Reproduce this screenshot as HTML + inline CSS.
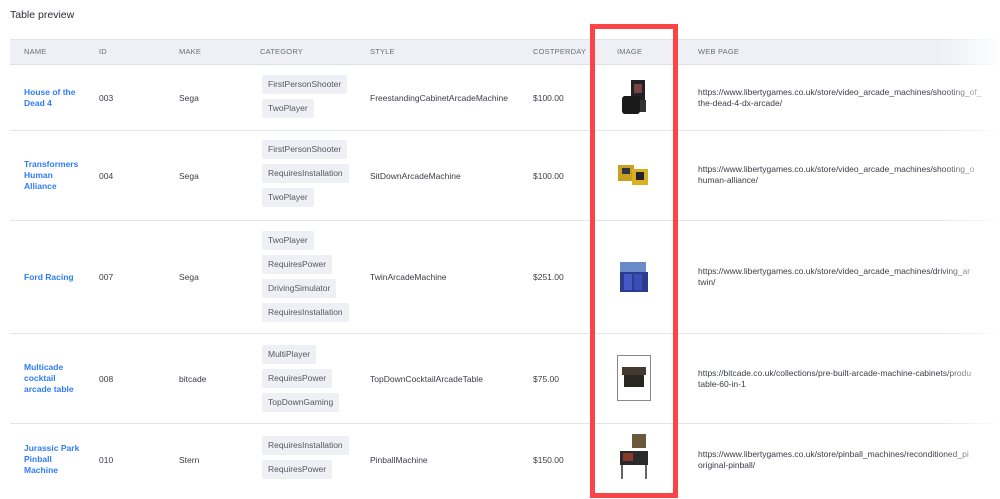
<!DOCTYPE html>
<html><head><meta charset="utf-8"><style>
*{margin:0;padding:0;box-sizing:border-box}
body{width:1000px;height:499px;overflow:hidden;background:#fff;font-family:"Liberation Sans",sans-serif;font-size:8.5px;color:#3a3d45;position:relative}
.a{position:absolute;white-space:nowrap}
.title{left:10px;top:9px;font-size:10.5px;color:#2a2c33}
.hdr{position:absolute;left:10px;top:39px;width:990px;height:26px;background:#eef0f5;border-top:1px solid #e2e4ea;border-bottom:1px solid #dde0e7}
.h{top:47px;font-size:7.5px;color:#6b6f7a;letter-spacing:.2px}
.line{position:absolute;left:10px;width:990px;height:1px;background:#e3e5ea}
.tag{position:absolute;left:262px;height:19px;line-height:19px;padding:0 6px;background:#eef0f5;border-radius:2px;color:#555962;font-size:8.5px;white-space:nowrap}
.nm{color:#2f7cf6;font-weight:bold;line-height:11px;font-size:8.5px;white-space:normal;width:60px}
.url{line-height:11px;left:698px}
.fade{position:absolute;left:940px;top:0;width:60px;height:499px;background:linear-gradient(to right,rgba(255,255,255,0),rgba(255,255,255,.95))}
.red{position:absolute;left:590px;top:24px;width:88px;height:474px;border:5px solid #fb4447}
.img{position:absolute}
</style></head><body>
<div class="a title">Table preview</div>
<div class="hdr"></div>
<div class="a h" style="left:24px">NAME</div>
<div class="a h" style="left:99px">ID</div>
<div class="a h" style="left:179px">MAKE</div>
<div class="a h" style="left:260px">CATEGORY</div>
<div class="a h" style="left:370px">STYLE</div>
<div class="a h" style="left:533px">COSTPERDAY</div>
<div class="a h" style="left:617px">IMAGE</div>
<div class="a h" style="left:698px">WEB PAGE</div>

<div class="line" style="top:130px"></div>
<div class="line" style="top:220px"></div>
<div class="line" style="top:333px"></div>
<div class="line" style="top:423px"></div>

<div class="a nm" style="left:24px;top:87px">House of the Dead 4</div>
<div class="a" style="left:99px;top:93px">003</div>
<div class="a" style="left:179px;top:93px">Sega</div>
<div class="tag" style="top:75px">FirstPersonShooter</div>
<div class="tag" style="top:99px">TwoPlayer</div>
<div class="a" style="left:370px;top:93px">FreestandingCabinetArcadeMachine</div>
<div class="a" style="left:533px;top:93px">$100.00</div>
<div class="a url" style="top:87px">https://www.libertygames.co.uk/store/video_arcade_machines/shooting_of_<br>the-dead-4-dx-arcade/</div>
<svg class="img" style="left:620px;top:80px" width="28" height="36"><rect x="11" y="0" width="14" height="22" fill="#222"/><rect x="14" y="4" width="8" height="9" fill="#744"/><rect x="2" y="16" width="18" height="18" rx="3" fill="#1a1a1a"/><rect x="20" y="20" width="6" height="12" fill="#333"/></svg>

<div class="a nm" style="left:24px;top:159px">Transformers Human Alliance</div>
<div class="a" style="left:99px;top:171px">004</div>
<div class="a" style="left:179px;top:171px">Sega</div>
<div class="tag" style="top:140px">FirstPersonShooter</div>
<div class="tag" style="top:164px">RequiresInstallation</div>
<div class="tag" style="top:188px">TwoPlayer</div>
<div class="a" style="left:370px;top:171px">SitDownArcadeMachine</div>
<div class="a" style="left:533px;top:171px">$100.00</div>
<div class="a url" style="top:164px">https://www.libertygames.co.uk/store/video_arcade_machines/shooting_o<br>human-alliance/</div>
<svg class="img" style="left:616px;top:163px" width="34" height="24"><rect x="2" y="2" width="16" height="16" fill="#c9a020"/><rect x="6" y="5" width="8" height="6" fill="#334"/><rect x="16" y="6" width="16" height="16" fill="#d8b020"/><rect x="20" y="9" width="8" height="8" fill="#223"/></svg>

<div class="a nm" style="left:24px;top:272px">Ford Racing</div>
<div class="a" style="left:99px;top:272px">007</div>
<div class="a" style="left:179px;top:272px">Sega</div>
<div class="tag" style="top:231px">TwoPlayer</div>
<div class="tag" style="top:255px">RequiresPower</div>
<div class="tag" style="top:279px">DrivingSimulator</div>
<div class="tag" style="top:303px">RequiresInstallation</div>
<div class="a" style="left:370px;top:272px">TwinArcadeMachine</div>
<div class="a" style="left:533px;top:272px">$251.00</div>
<div class="a url" style="top:266px">https://www.libertygames.co.uk/store/video_arcade_machines/driving_ar<br>twin/</div>
<svg class="img" style="left:618px;top:260px" width="32" height="34"><rect x="2" y="2" width="26" height="10" fill="#6a8ac8"/><rect x="2" y="12" width="28" height="20" fill="#2a3c8c"/><rect x="6" y="14" width="8" height="16" fill="#4658c8"/><rect x="16" y="14" width="8" height="16" fill="#3a4cb8"/></svg>

<div class="a nm" style="left:24px;top:362px">Multicade cocktail arcade table</div>
<div class="a" style="left:99px;top:374px">008</div>
<div class="a" style="left:179px;top:374px">bitcade</div>
<div class="tag" style="top:345px">MultiPlayer</div>
<div class="tag" style="top:369px">RequiresPower</div>
<div class="tag" style="top:393px">TopDownGaming</div>
<div class="a" style="left:370px;top:374px">TopDownCocktailArcadeTable</div>
<div class="a" style="left:533px;top:374px">$75.00</div>
<div class="a url" style="top:368px">https://bitcade.co.uk/collections/pre-built-arcade-machine-cabinets/produ<br>table-60-in-1</div>
<svg class="img" style="left:617px;top:355px" width="34" height="46"><rect x=".5" y=".5" width="33" height="45" fill="#fff" stroke="#888"/><rect x="5" y="12" width="24" height="8" fill="#443a30"/><rect x="7" y="20" width="20" height="12" fill="#2a2622"/></svg>

<div class="a nm" style="left:24px;top:443px">Jurassic Park Pinball Machine</div>
<div class="a" style="left:99px;top:455px">010</div>
<div class="a" style="left:179px;top:455px">Stern</div>
<div class="tag" style="top:436px">RequiresInstallation</div>
<div class="tag" style="top:460px">RequiresPower</div>
<div class="a" style="left:370px;top:455px">PinballMachine</div>
<div class="a" style="left:533px;top:455px">$150.00</div>
<div class="a url" style="top:449px">https://www.libertygames.co.uk/store/pinball_machines/reconditioned_pi<br>original-pinball/</div>
<svg class="img" style="left:618px;top:433px" width="32" height="48"><rect x="14" y="1" width="14" height="14" fill="#6a5a3a"/><rect x="2" y="18" width="28" height="14" fill="#2a2a2a"/><rect x="5" y="20" width="10" height="8" fill="#8a3a2a"/><line x1="4" y1="32" x2="4" y2="46" stroke="#333" stroke-width="1.5"/><line x1="28" y1="32" x2="28" y2="46" stroke="#333" stroke-width="1.5"/></svg>

<div class="fade"></div>
<div class="red"></div>
</body></html>
